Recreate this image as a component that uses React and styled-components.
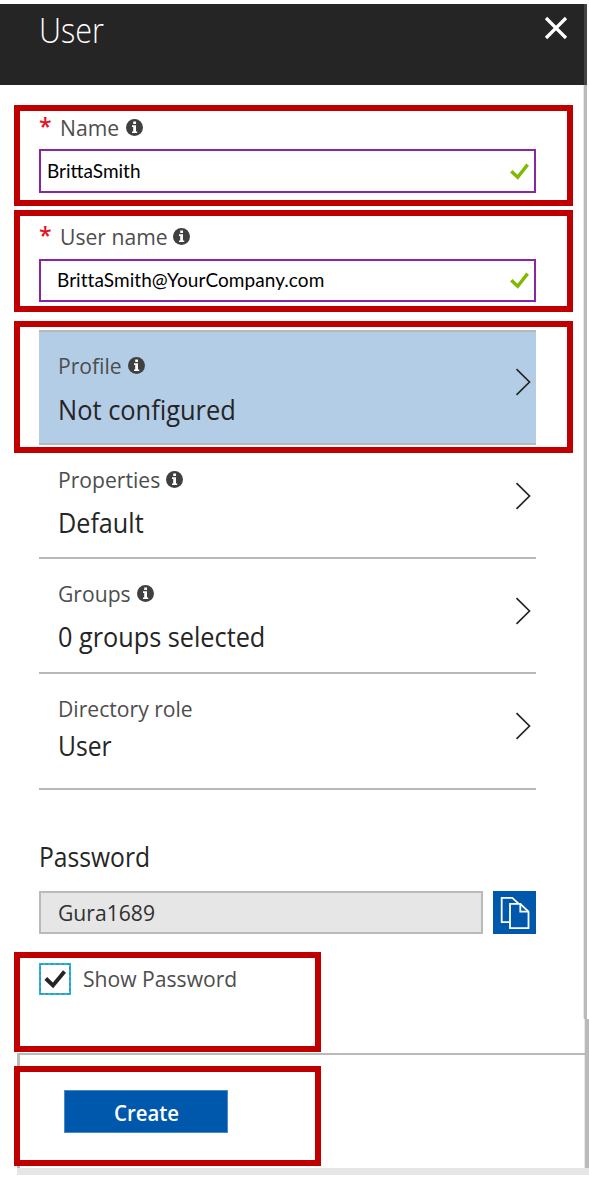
import React from "react";
import styled, { createGlobalStyle, css } from "styled-components";

const GlobalStyle = createGlobalStyle`
  * { box-sizing: border-box; }
  body { margin: 0; background: #fff; }
`;

const Blade = styled.div`
  width: 589px;
  height: 1199px;
  padding-top: 4px;
  overflow: hidden;
  background: #fff;
  font-family: "Open Sans", "Noto Sans", sans-serif;
  color: #252525;
`;

const Header = styled.header`
  display: flex;
  justify-content: space-between;
  align-items: flex-start;
  width: 587px;
  height: 81px;
  padding: 12px 16px 0 39px;
  background: #252525;
  border-right: 3px solid #474544;
`;

/* Open Sans condensed slightly; $w reserves the condensed width in the row. */
const Text = styled.span`
  display: block;
  flex: none;
  width: ${(p) => (p.$w ? `${p.$w}px` : "auto")};
  white-space: nowrap;
  transform: scaleX(${(p) => p.$scale || 0.96});
  transform-origin: 0 50%;
`;

const Title = styled(Text)`
  font-size: 34px;
  font-weight: 300;
  line-height: 28px;
  color: #fff;
`;

const LabelText = styled(Text)`
  font-size: 22px;
  line-height: 30px;
  color: #4d4d4d;
`;

const ValueText = styled(Text)`
  font-size: 26.5px;
  line-height: 38px;
  height: 36px;
  color: #252525;
`;

const Body = styled.main`
  width: 587px;
  height: 934px;
  padding: 20px 0 0 14px;
  border-right: 3px solid #bababa;
  box-shadow: inset -1px 0 0 #e9e9e9;
`;

const Frame = styled.section`
  position: relative;
  width: ${(p) => p.$width || 559}px;
  height: ${(p) => p.$height}px;
  margin-top: ${(p) => p.$gap || 0}px;
  padding: ${(p) => p.$pad || 0}px 31px 0 19px;
  border: 6px solid #c00000;
`;

const FieldLabel = styled.div`
  display: flex;
  height: 30px;
  margin-bottom: ${(p) => p.$gap || 7}px;
  svg { margin: 7px 0 0 5px; flex: none; }
`;

const Required = styled.span`
  width: 21px;
  font-size: 23px;
  font-weight: 600;
  line-height: 28px;
  color: #e81123;
`;

const Input = styled.div`
  display: flex;
  justify-content: space-between;
  align-items: center;
  width: 497px;
  height: ${(p) => p.$height}px;
  padding: 0 5px 0 ${(p) => p.$indent}px;
  border: 2px solid #8a25a3;
  background: #fff;
  font-family: Lato, sans-serif;
  font-size: 19px;
  color: #000;
`;

const InputValue = styled.span`
  letter-spacing: ${(p) => p.$track || 0}px;
  transform: translateY(-1px);
`;

const PickerList = styled.div`
  padding-left: 25px;
`;

const Picker = styled.div`
  display: flex;
  justify-content: space-between;
  width: 497px;
  height: ${(p) => p.$height}px;
  padding: ${(p) => p.$top}px 5px 0 19px;
  border-bottom: 2px solid #b8b8b8;
  ${(p) =>
    p.$active &&
    css`
      background: #b3cde6;
      border-top: 2px solid #b8b8b8;
    `}
  > svg { margin-top: ${(p) => p.$arrow}px; }
`;

const PasswordBlock = styled.div`
  padding: 48px 0 0 25px;
`;

const PasswordRow = styled.div`
  display: flex;
  gap: 10px;
  margin-top: 17px;
`;

const PasswordBox = styled.div`
  width: 444px;
  height: 43px;
  padding: 4px 0 0 17px;
  background: #e6e6e6;
  border: 2px solid #bababa;
`;

const PasswordText = styled(LabelText)`
  color: #303030;
`;

const CopyButton = styled.button`
  display: block;
  width: 43px;
  height: 43px;
  padding: 0;
  border: 0;
  background: #0058ad;
  svg { display: block; }
`;

const CheckRow = styled.div`
  display: flex;
  gap: 12px;
`;

const Checkbox = styled.span`
  width: 32px;
  height: 32px;
  svg { display: block; }
`;

const Tail = styled.div`
  width: 589px;
  height: 149px;
  padding: 34px 0 0 17px;
  border-right: 4px solid #bababa;
  box-shadow: inset -1px 0 0 #e9e9e9;
`;

const Footer = styled.footer`
  width: 572px;
  height: 115px;
  padding-top: 11px;
  border-top: 2px solid #bababa;
  border-left: 3px solid #bababa;
`;

const FooterFrame = styled(Frame)`
  margin-left: -6px;
  padding: 18px 0 0 44px;
  background: #fff;
`;

const CreateButton = styled.button`
  display: block;
  width: 164px;
  height: 43px;
  padding: 2px 0 0 49px;
  border: 1px solid #4a88c6;
  background: #0058ad;
  color: #fff;
  font: 600 21px/40px "Open Sans", "Noto Sans", sans-serif;
  text-align: left;
`;

const BottomBar = styled.div`
  height: 7px;
  margin-left: 17px;
  background: #e6e6e6;
`;

const InfoIcon = () => (
  <svg width="17" height="17" viewBox="0 0 17 17">
    <circle cx="8.5" cy="8.5" r="8.5" fill="#404040" />
    <path d="M7.2 2.6h2.8v2.4H7.2zM6 6.3h4v6.2h1.2v1.6H6v-1.6h1.2V7.9H6z" fill="#fff" />
  </svg>
);

const CloseIcon = () => (
  <svg width="24" height="24" viewBox="0 0 24 24">
    <path d="M2 2l20 20M22 2L2 22" stroke="#fff" strokeWidth="3.2" />
  </svg>
);

const ValidIcon = () => (
  <svg width="19" height="17" viewBox="0 0 19 17">
    <path d="M1.3 8.2l6.4 6.1L17.6 1.6" fill="none" stroke="#7fba00" strokeWidth="3.4" />
  </svg>
);

const Chevron = () => (
  <svg width="16" height="28" viewBox="0 0 16 28">
    <path d="M1.5 1.2l13 12.8-13 12.8" fill="none" stroke="#252525" strokeWidth="1.7" />
  </svg>
);

const CopyIcon = () => (
  <svg width="43" height="43" viewBox="0 0 43 43" fill="none" stroke="#fff" strokeWidth="1.8">
    <path d="M16.5 31.2H8.7V6.8h10.6l6 5.6" />
    <path d="M17 12.8h10.3l8.2 7.8v16.6H17z" />
    <path d="M27.3 12.8v7.8h8.2" />
  </svg>
);

const CheckIcon = () => (
  <svg width="32" height="32" viewBox="0 0 32 32" fill="none">
    <rect x="1" y="1" width="30" height="30" stroke="#12bdf0" strokeWidth="2" />
    <rect x="1.2" y="1.2" width="29.6" height="29.6" stroke="#80695c" strokeWidth="1" strokeDasharray="2.4 3" />
    <path d="M6.8 15.5l7.2 7L25.5 8.6" stroke="#252525" strokeWidth="3.9" />
  </svg>
);

const Field = ({ label, width, gap, height, indent, value, track }) => (
  <>
    <FieldLabel $gap={gap}>
      <Required>*</Required>
      <LabelText $w={width}>{label}</LabelText>
      <InfoIcon />
    </FieldLabel>
    <Input $height={height} $indent={indent}>
      <InputValue $track={track}>{value}</InputValue>
      <ValidIcon />
    </Input>
  </>
);

const PickerRow = ({ label, width, value, scale, info = true, labelGap = 10, ...box }) => (
  <Picker $height={box.height} $top={box.top} $arrow={box.arrow} $active={box.active}>
    <div>
      <FieldLabel $gap={labelGap}>
        <LabelText $w={width}>{label}</LabelText>
        {info && <InfoIcon />}
      </FieldLabel>
      <ValueText $scale={scale}>{value}</ValueText>
    </div>
    <Chevron />
  </Picker>
);

export default function App() {
  return (
    <>
      <GlobalStyle />
      <Blade>
        <Header>
          <Title $w={64} $scale={0.9}>User</Title>
          <CloseIcon />
        </Header>
        <Body>
          <Frame $height={101} $pad={1}>
            <Field label="Name" width={61} height={44} indent={6} value="BrittaSmith" />
          </Frame>
          <Frame $height={102} $gap={4} $pad={5}>
            <Field label="User name" width={108} gap={8} height={43} indent={16} value="BrittaSmith@YourCompany.com" track={0.06} />
          </Frame>
          <Frame $height={132} $gap={9} $pad={3}>
            <PickerRow active label="Profile" width={65} value="Not configured" height={115} top={18} arrow={18} labelGap={11} />
          </Frame>
          <PickerList>
            <PickerRow label="Properties" width={103} value="Default" scale={0.95} height={106} top={11} arrow={18} />
            <PickerRow label="Groups" width={74} value="0 groups selected" scale={0.953} height={115} top={19} arrow={19} />
            <PickerRow label="Directory role" width={137} value="User" scale={0.93} info={false} labelGap={4} height={116} top={19} arrow={19} />
          </PickerList>
          <PasswordBlock>
            <ValueText $scale={0.93}>Password</ValueText>
            <PasswordRow>
              <PasswordBox>
                <PasswordText>Gura1689</PasswordText>
              </PasswordBox>
              <CopyButton aria-label="Copy password">
                <CopyIcon />
              </CopyButton>
            </PasswordRow>
          </PasswordBlock>
          <Frame $width={307} $height={100} $gap={18} $pad={5}>
            <CheckRow>
              <Checkbox>
                <CheckIcon />
              </Checkbox>
              <LabelText>Show Password</LabelText>
            </CheckRow>
          </Frame>
        </Body>
        <Tail>
          <Footer>
            <FooterFrame $width={307} $height={100}>
              <CreateButton>
                <Text $scale={0.97}>Create</Text>
              </CreateButton>
            </FooterFrame>
          </Footer>
        </Tail>
        <BottomBar />
      </Blade>
    </>
  );
}
